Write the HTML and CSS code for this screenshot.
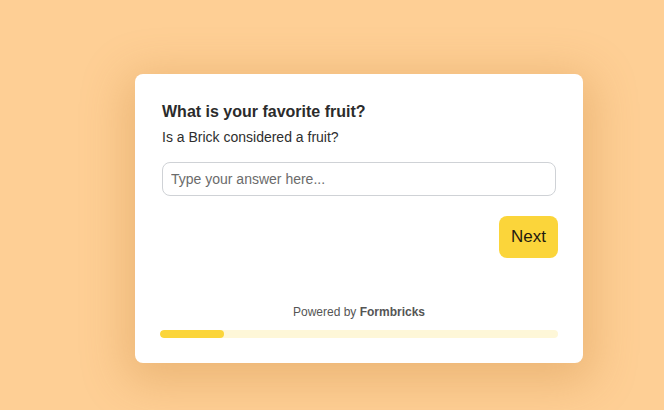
FILE: index.html
```html
<!DOCTYPE html>
<html>
<head>
<meta charset="utf-8">
<link rel="stylesheet" href="styles.css">
</head>
<body>
<div class="page">
  <div class="card">
    <div class="question">
      <h1 class="title">What is your favorite fruit?</h1>
      <p class="subtitle">Is a Brick considered a fruit?</p>
      <input class="answer" type="text" placeholder="Type your answer here...">
    </div>
    <div class="actions">
      <button class="next">Next</button>
    </div>
    <div class="footer">
      <div class="powered">Powered by <b>Formbricks</b></div>
      <div class="progress"><div class="progress-fill" style="width:16%"></div></div>
    </div>
  </div>
</div>
</body>
</html>
```
FILE: styles.css
```css
html, body {
  margin: 0;
  padding: 0;
}
body {
  background: #fecf95;
  font-family: "Liberation Sans", Arial, sans-serif;
  width: 664px;
  height: 410px;
  overflow: hidden;
}
.page {
  padding: 74px 0 0 135px;
}
.card {
  width: 448px;
  height: 289px;
  box-sizing: border-box;
  background: #ffffff;
  border-radius: 8px;
  box-shadow: 0 10px 45px 10px rgba(190, 120, 40, 0.28);
  padding: 28px 25px 0 25px;
  display: flex;
  flex-direction: column;
}
.question {
  padding: 0 2px;
}
.title {
  margin: 0;
  font-size: 16px;
  font-weight: bold;
  color: #2b2b2b;
  line-height: 20px;
}
.subtitle {
  margin: 6px 0 0 0;
  font-size: 14px;
  color: #2e2e2e;
  line-height: 18px;
}
.answer {
  display: block;
  margin-top: 16px;
  width: 100%;
  height: 34px;
  box-sizing: border-box;
  border: 1px solid #cfd2d6;
  border-radius: 8px;
  padding: 0 8px;
  font-family: "Liberation Sans", Arial, sans-serif;
  font-size: 14px;
  color: #333;
  background: #fff;
}
.answer::placeholder {
  color: #6b6b6b;
}
.actions {
  display: flex;
  justify-content: flex-end;
  margin-top: 20px;
}
.next {
  width: 59px;
  height: 42px;
  border: none;
  border-radius: 8px;
  background: #fbd53a;
  color: #1f1a10;
  font-family: "Liberation Sans", Arial, sans-serif;
  font-size: 17px;
  padding: 0;
}
.footer {
  margin-top: 47px;
}
.powered {
  text-align: center;
  font-size: 12px;
  color: #555;
  line-height: 14px;
}
.powered b {
  color: #555;
}
.progress {
  margin-top: 11px;
  height: 8px;
  border-radius: 4px;
  background: #fef7d8;
  overflow: hidden;
}
.progress-fill {
  height: 100%;
  border-radius: 4px;
  background: #fbd53a;
}
```
